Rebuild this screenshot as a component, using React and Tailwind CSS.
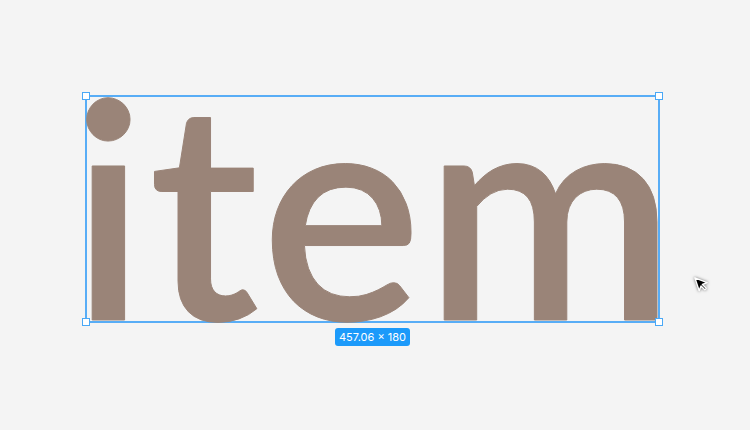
import React from 'react';

function Handle({ className }) {
    return <span className={`absolute h-[8px] w-[8px] bg-white border-[1.5px] border-[#4aa8f6] ${className}`} />;
}

function Cursor() {
    return (
        <svg width="17" height="17" viewBox="0 0 18 18" className="drop-shadow-[0_0_1.5px_rgba(0,0,0,0.55)]">
            <path d="M2 2 L15 7 L10 9 L14 13 L12.5 14.5 L8.5 10.5 L6.5 15.5 Z" fill="#000" stroke="#fff" strokeWidth="1.5" strokeLinejoin="round" />
        </svg>
    );
}

export default function App() {
    return (
        <div className="relative h-[430px] w-[750px] bg-[#f4f4f4] overflow-hidden font-['Lato',sans-serif]">
            <div className="flex pt-[95px] pl-[85px]">
                <div className="flex flex-col items-center gap-[5px]">
                    {/* selected text layer */}
                    <div className="relative w-[575px] h-[228px] border-2 border-[#58adf6]">
                        <div className="h-full">
                            <div className="-mt-[45px] -ml-[16px] text-[302px] leading-none font-semibold tracking-[3px] text-[#9a8478] [-webkit-text-stroke:1px_#9a8478] whitespace-nowrap">
                                item
                            </div>
                        </div>
                        <Handle className="-left-[5px] -top-[5px]" />
                        <Handle className="-right-[5px] -top-[5px]" />
                        <Handle className="-left-[5px] -bottom-[5px]" />
                        <Handle className="-right-[5px] -bottom-[5px]" />
                    </div>
                    <div className="rounded-[3px] bg-[#1c9afa] px-[4px] h-[18px] flex items-center text-[11px] text-white font-['Inter',sans-serif] whitespace-nowrap">
                        457.06 × 180
                    </div>
                </div>
            </div>
            <div className="absolute left-[693px] top-[276px]">
                <Cursor />
            </div>
        </div>
    );
}
